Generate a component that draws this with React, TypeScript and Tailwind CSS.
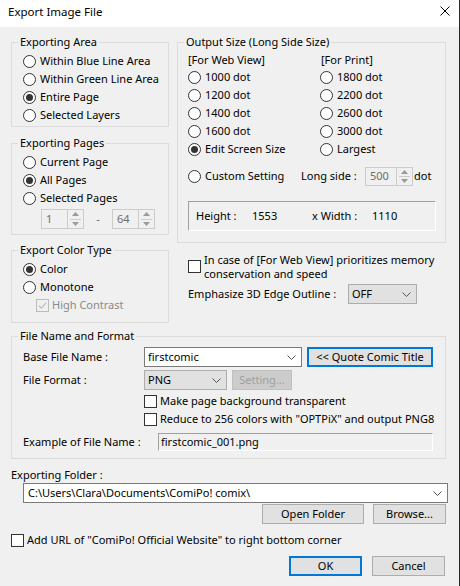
import React from "react";

function Radio({ checked = false, label, className = "" }: { checked?: boolean; label: string; className?: string }) {
  return (
    <div className={"flex h-[18px] items-center " + className}>
      <span className="flex h-[13px] w-[13px] shrink-0 items-center justify-center rounded-full border border-[#333333] bg-white">
        {checked && <span className="h-[7px] w-[7px] rounded-full bg-[#333333]" />}
      </span>
      <span className="ml-[4px] whitespace-nowrap">{label}</span>
    </div>
  );
}

function Box({ disabled = false, checked = false, className = "" }: { disabled?: boolean; checked?: boolean; className?: string }) {
  return (
    <span
      className={
        "relative block h-[13px] w-[13px] shrink-0 border " +
        (disabled ? "border-[#bcbcbc] bg-transparent " : "border-[#333333] bg-white ") +
        className
      }
    >
      {checked && (
        <svg className="absolute left-[1px] top-[1px]" width="9" height="9" viewBox="0 0 9 9">
          <path d="M0.8 4.6 L3.4 7.2 L8.2 1.6" fill="none" stroke={disabled ? "#bcbcbc" : "#333333"} strokeWidth="1.2" />
        </svg>
      )}
    </span>
  );
}

function Group({ title, className = "", children }: { title: string; className?: string; children: React.ReactNode }) {
  return (
    <fieldset className={"m-0 min-w-0 border border-[#dcdcdc] p-0 " + className}>
      <legend className="ml-[6px] px-[2px] leading-[16px]">{title}</legend>
      {children}
    </fieldset>
  );
}

function Tri({ down = false }: { down?: boolean }) {
  return (
    <svg width="7" height="4" viewBox="0 0 7 4">
      <path d={down ? "M0 0 L7 0 L3.5 4 Z" : "M0 4 L7 4 L3.5 0 Z"} fill="#9a9a9a" />
    </svg>
  );
}

function Spin({ value, className = "" }: { value: string; className?: string }) {
  return (
    <div className={"flex border border-[#cccccc] bg-[#f0f0f0] " + className}>
      <div className="flex flex-1 items-center pl-[4px] text-[#6d6d6d]">{value}</div>
      <div className="flex w-[16px] flex-col border-l border-[#cccccc]">
        <div className="flex flex-1 items-center justify-center">
          <Tri />
        </div>
        <div className="mx-[2px] h-px bg-[#cccccc]" />
        <div className="flex flex-1 items-center justify-center">
          <Tri down />
        </div>
      </div>
    </div>
  );
}

function Chevron() {
  return (
    <svg width="9" height="5" viewBox="0 0 9 5">
      <path d="M0.5 0.5 L4.5 4.5 L8.5 0.5" fill="none" stroke="#555555" strokeWidth="1" />
    </svg>
  );
}

function Combo({ value, gray = false, className = "" }: { value: string; gray?: boolean; className?: string }) {
  return (
    <div
      className={
        "flex items-center justify-between border pl-[3px] pr-[5px] " +
        (gray ? "border-[#adadad] bg-[#e1e1e1] " : "border-[#7a7a7a] bg-white ") +
        className
      }
    >
      <span className="whitespace-nowrap">{value}</span>
      <Chevron />
    </div>
  );
}

function Btn({ label, primary = false, disabled = false, className = "" }: { label: string; primary?: boolean; disabled?: boolean; className?: string }) {
  let cls = "border border-[#adadad] bg-[#e1e1e1] ";
  if (primary) cls = "border-2 border-[#0078d7] bg-[#e1e1e1] ";
  if (disabled) cls = "border border-[#bfbfbf] bg-[#cccccc] text-[#a0a0a0] ";
  return <div className={"flex h-[20px] items-center justify-center whitespace-nowrap " + cls + className}>{label}</div>;
}

export default function App() {
  return (
    <div className="relative h-[586px] w-[460px] overflow-hidden border-r border-[#2b2b2b] bg-[#f0f0f0] font-['Noto_Sans',sans-serif] text-[11px] leading-[16px] text-black">
      <div className="flex h-[27px] items-start justify-between bg-white pl-[8px] pr-[9px]">
        <span className="mt-[4px] text-[11.5px]">Export Image File</span>
        <svg className="mt-[6px]" width="10" height="10" viewBox="0 0 10 10">
          <path d="M0.5 0.5L9.5 9.5M9.5 0.5L0.5 9.5" stroke="#000" strokeWidth="1" />
        </svg>
      </div>

      <div className="pl-[11px] pt-[7px]">
        <div className="flex">
          {/* left column */}
          <div className="flex w-[158px] flex-col">
            <Group title="Exporting Area">
              <div className="pb-[2px] pl-[11px] pt-[2px]">
                <Radio label="Within Blue Line Area" />
                <Radio label="Within Green Line Area" />
                <Radio label="Entire Page" checked />
                <Radio label="Selected Layers" />
              </div>
            </Group>

            <Group title="Exporting Pages" className="mt-[8px]">
              <div className="pb-[5px] pl-[11px] pt-[2px]">
                <Radio label="Current Page" />
                <Radio label="All Pages" checked />
                <Radio label="Selected Pages" />
                <div className="mt-[2px] flex h-[20px] items-center pl-[18px]">
                  <Spin value="1" className="h-[20px] w-[43px]" />
                  <span className="w-[28px] text-center text-[#6d6d6d]">-</span>
                  <Spin value="64" className="h-[20px] w-[43px]" />
                </div>
              </div>
            </Group>

            <Group title="Export Color Type" className="mt-[7px]">
              <div className="pb-[8px] pl-[11px] pt-[2px]">
                <Radio label="Color" checked />
                <Radio label="Monotone" />
                <div className="flex h-[18px] items-center pl-[13px]">
                  <Box disabled checked />
                  <span className="ml-[3px] text-[#8a8a8a]">High Contrast</span>
                </div>
              </div>
            </Group>
          </div>

          {/* right column */}
          <div className="ml-[8px] flex w-[269px] flex-col">
            <Group title="Output Size (Long Side Size)">
              <div className="pb-[11px] pl-[10px] pr-[8px] pt-[1px]">
                <div className="grid grid-cols-[132px_1fr]">
                  <div className="flex h-[17px] items-center">[For Web View]</div>
                  <div className="flex h-[17px] items-center pl-[1px]">[For Print]</div>
                  <Radio label="1000 dot" />
                  <Radio label="1800 dot" />
                  <Radio label="1200 dot" />
                  <Radio label="2200 dot" />
                  <Radio label="1400 dot" />
                  <Radio label="2600 dot" />
                  <Radio label="1600 dot" />
                  <Radio label="3000 dot" />
                  <Radio label="Edit Screen Size" checked />
                  <Radio label="Largest" />
                </div>
                <div className="mt-[8px] flex h-[20px] items-center">
                  <div className="w-[113px]">
                    <Radio label="Custom Setting" />
                  </div>
                  <span className="w-[64px] whitespace-nowrap">Long side :</span>
                  <Spin value="500" className="h-[19px] w-[48px]" />
                  <span className="ml-[1px]">dot</span>
                </div>
                <div className="mt-[15px] flex h-[30px] w-[248px] items-center border border-b-white border-l-[#a0a0a0] border-r-white border-t-[#a0a0a0] pl-[7px]">
                  <span className="w-[56px] whitespace-nowrap">Height :</span>
                  <span className="w-[60px]">1553</span>
                  <span className="w-[60px] whitespace-nowrap">x Width :</span>
                  <span>1110</span>
                </div>
              </div>
            </Group>

            <div className="mt-[10px] flex items-start pl-[11px]">
              <Box className="mt-[7px]" />
              <div className="ml-[3px] flex flex-col">
                <span className="block h-[14px] leading-[14px] whitespace-nowrap">In case of [For Web View] prioritizes memory</span>
                <span className="block h-[14px] leading-[14px] whitespace-nowrap">conservation and speed</span>
              </div>
            </div>

            <div className="mt-[3px] flex h-[20px] items-center pl-[11px]">
              <span className="w-[160px] whitespace-nowrap">Emphasize 3D Edge Outline :</span>
              <Combo value="OFF" gray className="h-[20px] w-[69px]" />
            </div>
          </div>
        </div>

        <Group title="File Name and Format" className="mt-[5px] w-[435px]">
          <div className="pb-[7px] pl-[11px] pt-[3px]">
            <div className="flex h-[20px] items-center">
              <span className="w-[121px] whitespace-nowrap">Base File Name :</span>
              <Combo value="firstcomic" className="h-[20px] w-[158px]" />
              <Btn label="<< Quote Comic Title" primary className="ml-[5px] w-[126px]" />
            </div>
            <div className="mt-[3px] flex h-[20px] items-center">
              <span className="w-[121px] whitespace-nowrap">File Format :</span>
              <Combo value="PNG" gray className="h-[20px] w-[83px]" />
              <Btn label="Setting..." disabled className="ml-[5px] w-[60px]" />
            </div>
            <div className="mt-[2px] flex h-[18px] items-center pl-[121px]">
              <Box />
              <span className="ml-[3px] whitespace-nowrap">Make page background transparent</span>
            </div>
            <div className="flex h-[18px] items-center pl-[121px]">
              <Box />
              <span className="ml-[3px] whitespace-nowrap">Reduce to 256 colors with "OPTPiX" and output PNG8</span>
            </div>
            <div className="mt-[5px] flex h-[18px] items-center">
              <span className="w-[135px] whitespace-nowrap">Example of File Name :</span>
              <div className="flex h-[18px] w-[275px] items-center border border-b-white border-l-[#a0a0a0] border-r-white border-t-[#a0a0a0] pl-[2px]">
                firstcomic_001.png
              </div>
            </div>
          </div>
        </Group>

        <div className="mt-[8px] leading-[16px]">Exporting Folder :</div>
        <Combo value="C:\Users\Clara\Documents\ComiPo! comix\" className="ml-[12px] h-[20px] w-[425px] pl-[4px]" />
        <div className="mt-[1px] flex pl-[251px]">
          <Btn label="Open Folder" className="w-[102px]" />
          <Btn label="Browse..." className="ml-[9px] w-[73px]" />
        </div>
        <div className="mt-[7px] flex h-[18px] items-center">
          <Box />
          <span className="ml-[3px] whitespace-nowrap">Add URL of "ComiPo! Official Website" to right bottom corner</span>
        </div>
        <div className="mt-[7px] flex pl-[278px]">
          <Btn label="OK" primary className="w-[73px]" />
          <Btn label="Cancel" className="ml-[10px] w-[73px]" />
        </div>
      </div>
    </div>
  );
}
